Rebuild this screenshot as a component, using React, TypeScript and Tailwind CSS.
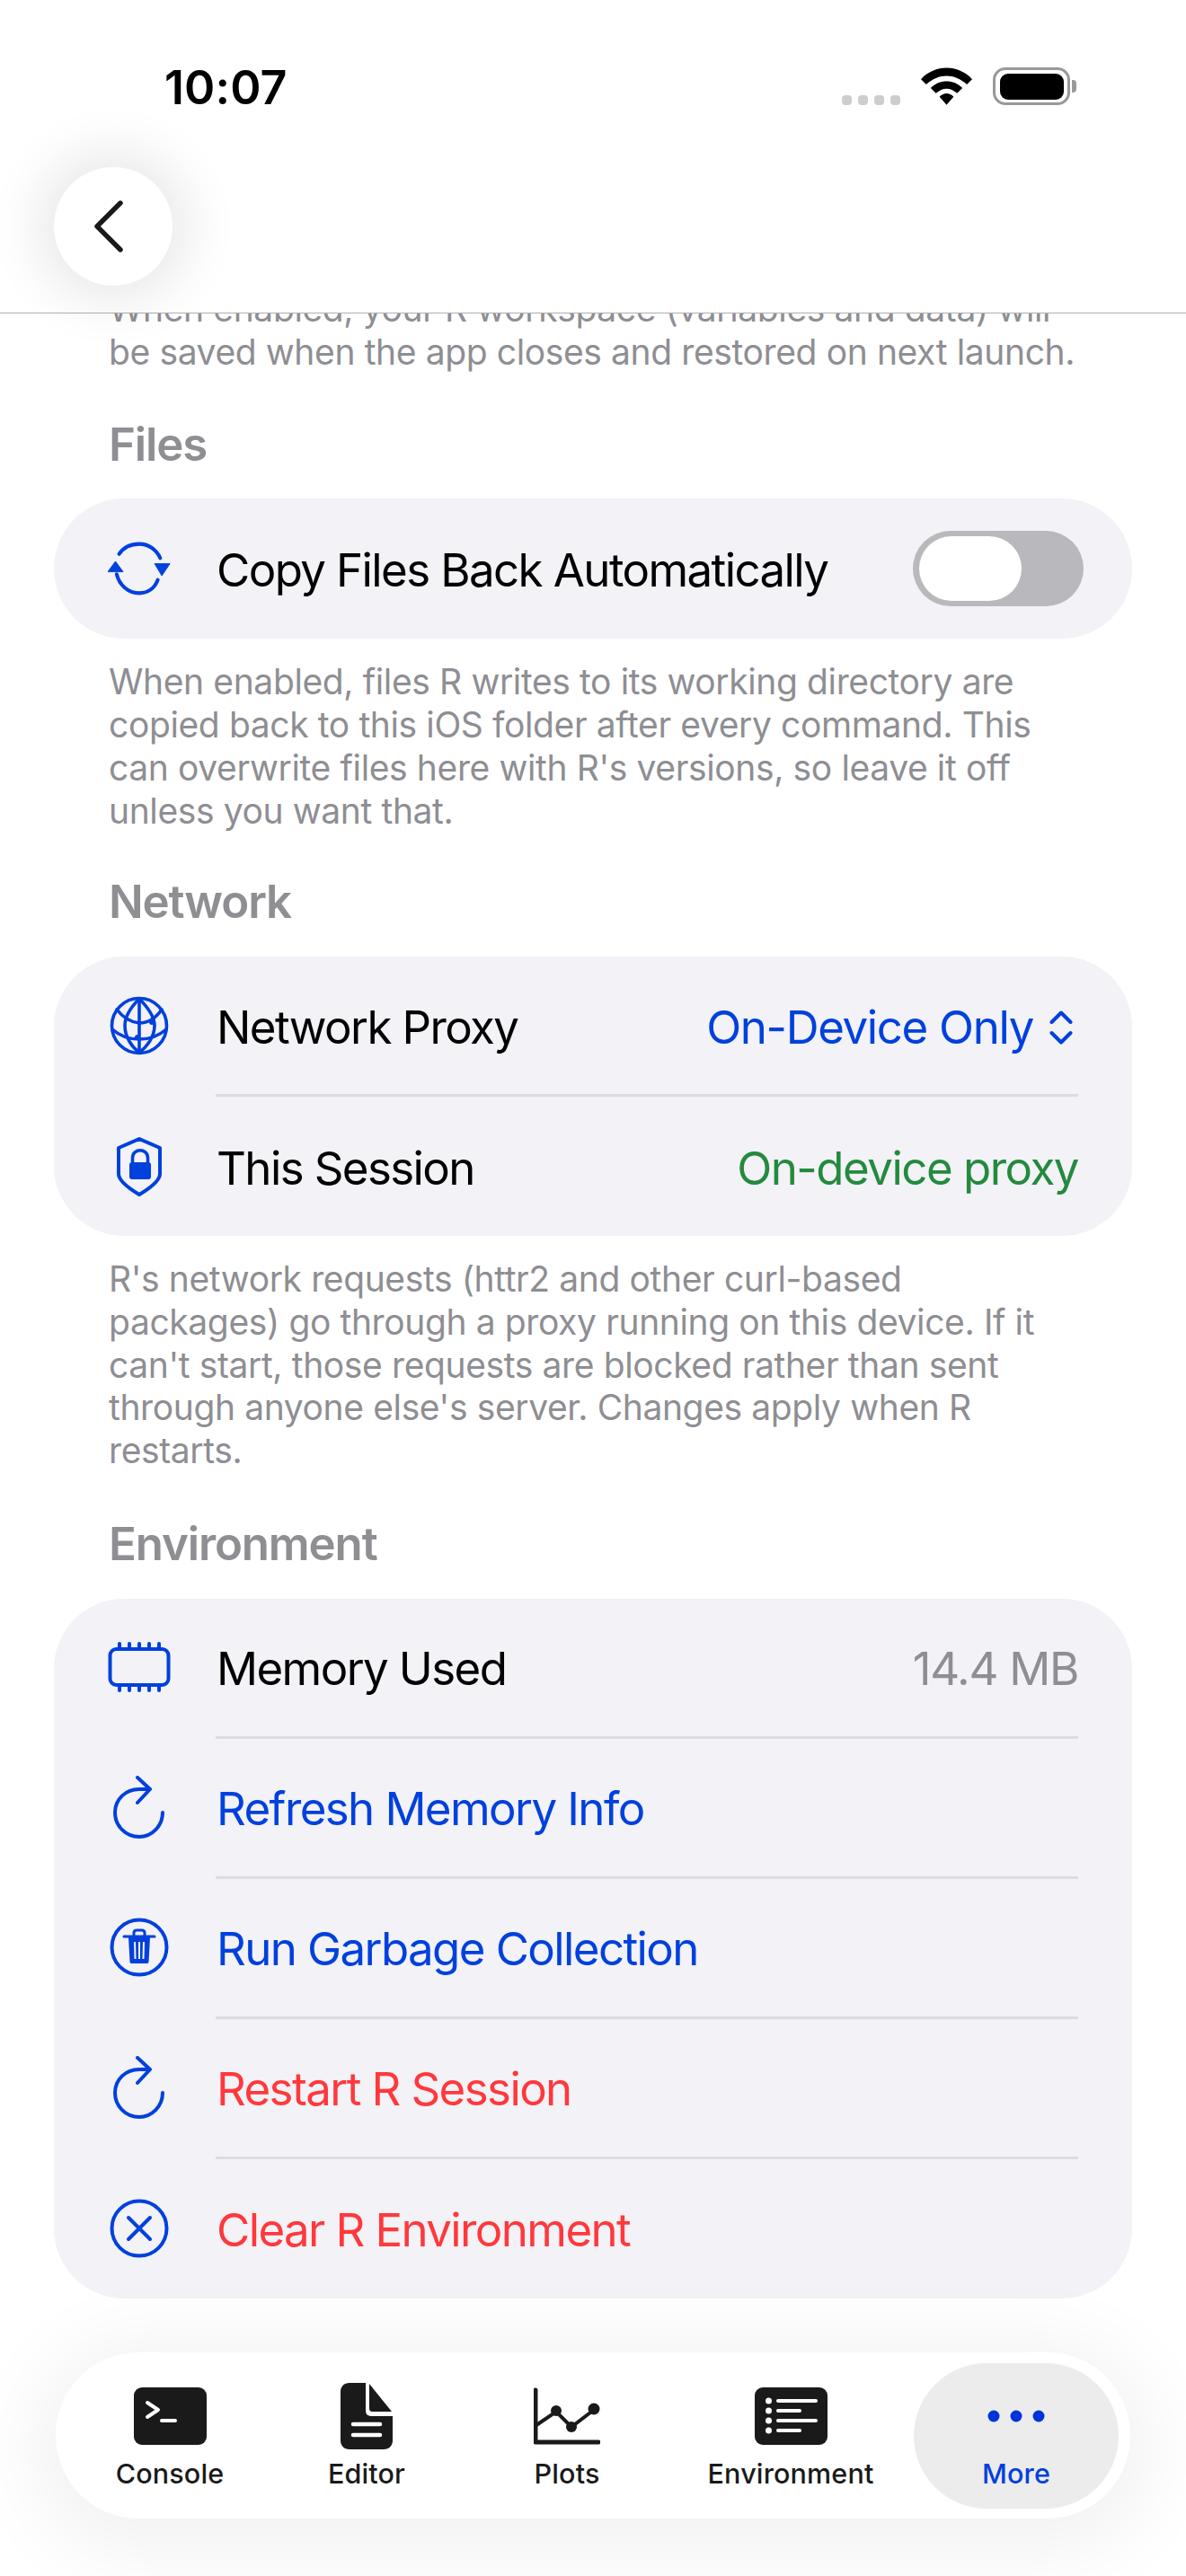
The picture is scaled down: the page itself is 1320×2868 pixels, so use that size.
import React from "react";

const blue = "#0040dd";

function SyncIcon() {
  return (
    <svg width="78" height="66" viewBox="0 0 78 66" fill="none">
      <path d="M14 15 C20 6 29 2.5 39 2.5 C50 2.5 60 9 65 20" stroke={blue} strokeWidth="4.5" strokeLinecap="round" />
      <path d="M11 40 C14 53 25 63.5 39 63.5 C49 63.5 58 58 62 47" stroke={blue} strokeWidth="4.5" strokeLinecap="round" />
      <path d="M0 37 L9.5 24 L19 37 Z" fill={blue} stroke={blue} strokeWidth="1" strokeLinejoin="round" />
      <path d="M58 27 L77 27 L67 42 Z" fill={blue} stroke={blue} strokeWidth="1" strokeLinejoin="round" />
    </svg>
  );
}
function GlobeIcon() {
  return (
    <svg width="66" height="66" viewBox="0 0 66 66" fill="none" stroke={blue} strokeWidth="3.6" strokeLinecap="round">
      <circle cx="33" cy="33" r="30.5" />
      <path d="M33 3 C22 14 17 24 17 33 C17 45 24 56 33 63" />
      <path d="M33 3 C44 14 50 24 50 33 C50 45 42 56 33 63" />
      <path d="M33 3 L33 63" />
      <path d="M8 15 C15 24 24 29 33 30 C42 30 51 25 58 15" />
      <path d="M3 37 C12 45 22 48 33 48 C44 48 54 45 63 37" />
      <circle cx="47" cy="29" r="3" fill={blue} stroke="none" />
      <circle cx="31" cy="46" r="3" fill={blue} stroke="none" />
    </svg>
  );
}
function ShieldIcon() {
  return (
    <svg width="52" height="66" viewBox="0 0 52 66" fill="none">
      <path d="M26 2 L49 12 L49 41 C49 49 36 58 26 64 C16 58 3 49 3 41 L3 12 Z" stroke={blue} strokeWidth="4" strokeLinejoin="round" />
      <rect x="15" y="28" width="24" height="19" rx="3" fill={blue} />
      <path d="M18.5 29 L18.5 23 C18.5 12 35.5 12 35.5 23 L35.5 29" stroke={blue} strokeWidth="3.5" />
    </svg>
  );
}
function ChipIcon() {
  return (
    <svg width="70" height="56" viewBox="0 0 70 56" fill="none">
      <rect x="2.5" y="8" width="65" height="40" rx="7" stroke={blue} strokeWidth="4" />
      {[13, 24, 35, 46, 57].map((x) => (
        <g key={x}>
          <line x1={x} y1="2" x2={x} y2="7" stroke={blue} strokeWidth="4" strokeLinecap="round" />
          <line x1={x} y1="49" x2={x} y2="54" stroke={blue} strokeWidth="4" strokeLinecap="round" />
        </g>
      ))}
    </svg>
  );
}
function RefreshIcon() {
  return (
    <svg width="58" height="70" viewBox="0 0 58 70" fill="none" stroke={blue} strokeWidth="4" strokeLinecap="round" strokeLinejoin="round">
      <path d="M55 41 C55 56 43 68 29 68 C14 68 2 56 2 41 C2 26 14 15 29 15 L40 15" />
      <path d="M27 2 L41 15 L27 30" />
    </svg>
  );
}
function TrashCircleIcon() {
  return (
    <svg width="66" height="66" viewBox="0 0 66 66" fill="none">
      <circle cx="33" cy="33" r="30.5" stroke={blue} strokeWidth="4" />
      <path d="M16 21 L50 21" stroke={blue} strokeWidth="3" strokeLinecap="round" />
      <path d="M27 20 L27 17 C27 15 28 14 30 14 L36 14 C38 14 39 15 39 17 L39 20" stroke={blue} strokeWidth="3" />
      <path d="M21 22 L45 22 L43.5 49 C43.5 50.5 42.5 51 41 51 L25 51 C23.5 51 22.5 50.5 22.5 49 Z" fill={blue} />
      <path d="M28 27 L28.5 46 M33 27 L33 46 M38 27 L37.5 46" stroke="#f2f2f7" strokeWidth="2" />
    </svg>
  );
}
function XCircleIcon() {
  return (
    <svg width="66" height="66" viewBox="0 0 66 66" fill="none" stroke={blue} strokeLinecap="round">
      <circle cx="33" cy="33" r="30.5" strokeWidth="4" />
      <path d="M21 21 L45 45 M45 21 L21 45" strokeWidth="4" />
    </svg>
  );
}

function Divider() {
  return <div className="ml-[180px] mr-[60px] h-[3px] bg-[#dcdce1]" />;
}

function Row({ icon, label, color, right, h }: { icon: React.ReactNode; label: string; color: string; right?: React.ReactNode; h: string }) {
  return (
    <div className={`flex items-center pl-[60px] pr-[60px] ${h}`}>
      <div className="flex w-[70px] items-center justify-center">{icon}</div>
      <span className={`ml-[51px] mt-[4px] flex-1 text-[51px] leading-[60px] tracking-[-1.6px] ${color}`}>{label}</span>
      {right}
    </div>
  );
}

function Footnote({ children, className }: { children: React.ReactNode; className: string }) {
  return <p className={`pl-[121px] pr-[40px] text-[39px] leading-[47.7px] tracking-[-0.38px] text-[#8e8e93] ${className}`}>{children}</p>;
}

function SectionTitle({ children, className }: { children: React.ReactNode; className: string }) {
  return <h2 className={`pl-[121px] text-[51px] font-semibold leading-[60px] tracking-[-1.15px] text-[#8e8e93] ${className}`}>{children}</h2>;
}

function Tab({ w, label, icon, active }: { w: string; label: string; icon: React.ReactNode; active?: boolean }) {
  return (
    <div className={`flex h-[162px] flex-col items-center ${w} ${active ? "rounded-[81px] bg-[#ececec]" : ""}`}>
      <div className="mt-[21px] flex h-[76px] items-center justify-center">{icon}</div>
      <span className={`mt-[6px] text-[30.5px] font-medium leading-[40px] tracking-[0.15px] ${active ? "text-[#0040dd]" : "text-[#1a1a1a]"}`}>{label}</span>
    </div>
  );
}

export default function App() {
  return (
    <div className="relative h-[2868px] w-[1320px] overflow-hidden bg-white font-['Inter','Liberation_Sans',sans-serif]">
      <header className="relative z-10 h-[349px] border-b border-b-[#b0b0b0] bg-white">
        <div className="flex h-[186px] items-start justify-between">
          <span className="ml-[183px] mt-[67px] text-[52px] font-semibold leading-[62px] tracking-[0.1px] text-black">10:07</span>
          <div className="mr-[122px] mt-[75px] flex items-end">
            <div className="flex gap-[7px]">
              {[0, 1, 2, 3].map((i) => (
                <div key={i} className="h-[11px] w-[11px] rounded-[4px] bg-[#cdcdcd]" />
              ))}
            </div>
            <svg className="ml-[23px]" width="57" height="42" viewBox="0 0 58 42">
              <path d="M0 13 C16 -4 42 -4 58 13 L52 19 C38 6 20 6 6 19 Z" fill="#000" />
              <path d="M11 23 C21 13 37 13 47 23 L41 29 C33 22 25 22 17 29 Z" fill="#000" />
              <path d="M21 33 C26 28 32 28 37 33 L29 42 Z" fill="#000" />
            </svg>
            <div className="ml-[23px] flex items-center">
              <div className="flex h-[42px] w-[86px] items-center justify-center rounded-[14px] border-[3.5px] border-[#999]">
                <div className="h-[29px] w-[71px] rounded-[9px] bg-black" />
              </div>
              <div className="ml-[2px] h-[14px] w-[5px] rounded-r-[4px] bg-[#999]" />
            </div>
          </div>
        </div>
        <div className="ml-[60px] flex h-[132px] w-[132px] items-center justify-center rounded-full bg-white pr-[10px] shadow-[0_0_60px_18px_rgba(0,0,0,0.09)]">
          <svg width="34" height="58" viewBox="0 0 34 58" fill="none" stroke="#1a1a1a" strokeWidth="5.4" strokeLinecap="round" strokeLinejoin="round">
            <path d="M30 3 L4 29 L30 55" />
          </svg>
        </div>
      </header>

      <main className="bg-white">
        <Footnote className="mt-[-29px]">
          When enabled, your R workspace (variables and data) will
          <br />
          be saved when the app closes and restored on next launch.
        </Footnote>

        <SectionTitle className="mt-[50px]">Files</SectionTitle>
        <section className="mx-[60px] mt-[30px] rounded-[78px] bg-[#f2f2f7]">
          <Row
            h="h-[156px]"
            icon={<SyncIcon />}
            label="Copy Files Back Automatically"
            color="text-black"
            right={
              <div className="mr-[-6px] flex h-[84px] w-[190px] items-center rounded-[42px] bg-[#b9b9bd] pl-[7px]">
                <div className="h-[72px] w-[114px] rounded-[36px] bg-white" />
              </div>
            }
          />
        </section>
        <Footnote className="mt-[24px]">
          When enabled, files R writes to its working directory are
          <br />
          copied back to this iOS folder after every command. This
          <br />
          can overwrite files here with R's versions, so leave it off
          <br />
          unless you want that.
        </Footnote>

        <SectionTitle className="mt-[48px]">Network</SectionTitle>
        <section className="mx-[60px] mt-[31px] rounded-[78px] bg-[#f2f2f7]">
          <Row
            h="h-[153px]"
            icon={<GlobeIcon />}
            label="Network Proxy"
            color="text-black"
            right={
              <div className="mr-[6px] mt-[4px] flex items-center gap-[18px]">
                <span className="text-[51px] leading-[60px] tracking-[-1.35px] text-[#0040dd]">On-Device Only</span>
                <svg width="26" height="38" viewBox="0 0 26 38" fill="none" stroke="#0040dd" strokeWidth="4" strokeLinecap="round" strokeLinejoin="round">
                  <path d="M2.5 13 L13 2.5 L23.5 13" />
                  <path d="M2.5 25 L13 35.5 L23.5 25" />
                </svg>
              </div>
            }
          />
          <Divider />
          <Row
            h="h-[155px]"
            icon={<ShieldIcon />}
            label="This Session"
            color="text-black"
            right={<span className="mt-[4px] text-[51px] leading-[60px] tracking-[-1.5px] text-[#248a3d]">On-device proxy</span>}
          />
        </section>
        <Footnote className="mt-[24px]">
          R's network requests (httr2 and other curl-based
          <br />
          packages) go through a proxy running on this device. If it
          <br />
          can't start, those requests are blocked rather than sent
          <br />
          through anyone else's server. Changes apply when R
          <br />
          restarts.
        </Footnote>

        <SectionTitle className="mt-[50px]">Environment</SectionTitle>
        <section className="mx-[60px] mt-[31px] rounded-[78px] bg-[#f2f2f7]">
          <Row
            h="h-[153px]"
            icon={<ChipIcon />}
            label="Memory Used"
            color="text-black"
            right={<span className="mt-[4px] text-[51px] leading-[60px] tracking-[-1.3px] text-[#8e8e93]">14.4 MB</span>}
          />
          <Divider />
          <Row h="h-[153px]" icon={<RefreshIcon />} label="Refresh Memory Info" color="text-[#0040dd]" />
          <Divider />
          <Row h="h-[153px]" icon={<TrashCircleIcon />} label="Run Garbage Collection" color="text-[#0040dd]" />
          <Divider />
          <Row h="h-[153px]" icon={<RefreshIcon />} label="Restart R Session" color="text-[#ff383c]" />
          <Divider />
          <Row h="h-[155px]" icon={<XCircleIcon />} label="Clear R Environment" color="text-[#ff383c]" />
        </section>
      </main>

      <nav className="absolute bottom-[64px] left-[62px] flex h-[185px] w-[1196px] items-center rounded-[92px] bg-white pl-[8px] shadow-[0_14px_90px_24px_rgba(0,0,0,0.055)]">
        <Tab
          w="w-[238px]"
          label="Console"
          icon={
            <svg width="81" height="64" viewBox="0 0 81 64">
              <rect width="81" height="64" rx="9" fill="#1a1a1a" />
              <path d="M15 17 L27 25 L15 33" fill="none" stroke="#fff" strokeWidth="4" strokeLinecap="round" strokeLinejoin="round" />
              <path d="M31 37 L46 37" stroke="#fff" strokeWidth="4" strokeLinecap="round" />
            </svg>
          }
        />
        <Tab
          w="w-[200px]"
          label="Editor"
          icon={
            <svg width="58" height="74" viewBox="0 0 58 74">
              <path d="M10 0 L28 0 L28 30 C28 35 30 37 35 37 L58 37 L58 64 C58 70 54 74 48 74 L10 74 C4 74 0 70 0 64 L0 10 C0 4 4 0 10 0 Z" fill="#1a1a1a" />
              <path d="M32 1 L57 32 L36 32 C33 32 32 31 32 28 Z" fill="#1a1a1a" />
              <path d="M14 46 L44 46 M14 58 L44 58" stroke="#fff" strokeWidth="4.5" strokeLinecap="round" />
            </svg>
          }
        />
        <Tab
          w="w-[246px]"
          label="Plots"
          icon={
            <svg width="74" height="64" viewBox="0 0 74 64" fill="none">
              <path d="M2 3 L2 61 L72 61" stroke="#1a1a1a" strokeWidth="5" strokeLinecap="round" strokeLinejoin="round" />
              <path d="M3 42 L25 27 L42 44 L67 25" stroke="#1a1a1a" strokeWidth="4" />
              <circle cx="25" cy="26" r="6" fill="#1a1a1a" />
              <circle cx="42" cy="44" r="6" fill="#1a1a1a" />
              <circle cx="67" cy="24" r="6.5" fill="#1a1a1a" />
            </svg>
          }
        />
        <Tab
          w="w-[252px]"
          label="Environment"
          icon={
            <svg width="81" height="64" viewBox="0 0 81 64">
              <rect width="81" height="64" rx="9" fill="#1a1a1a" />
              {[15, 26, 37, 48].map((y, i) => (
                <g key={y}>
                  <circle cx="15.5" cy={y} r="3.5" fill="#fff" />
                  <path d={`M26 ${y} L${i % 2 === 0 ? 68 : 50} ${y}`} stroke="#fff" strokeWidth="4" strokeLinecap="round" />
                </g>
              ))}
            </svg>
          }
        />
        <div className="ml-[11px]">
          <Tab
            w="w-[228px]"
            label="More"
            active
            icon={
              <svg width="64" height="14" viewBox="0 0 64 14" fill="#0033d9">
                <circle cx="7" cy="7" r="6.5" />
                <circle cx="32" cy="7" r="6.5" />
                <circle cx="57" cy="7" r="6.5" />
              </svg>
            }
          />
        </div>
      </nav>
    </div>
  );
}
